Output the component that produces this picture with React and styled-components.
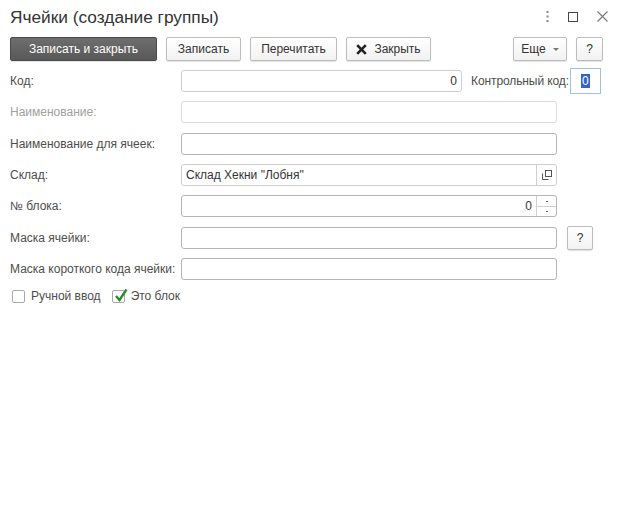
import React from 'react';
import styled, {createGlobalStyle} from 'styled-components';

const GlobalStyle = createGlobalStyle`
  html, body {
    margin: 0;
    padding: 0;
    background: #fff;
  }
  body {
    font-family: "Liberation Sans", Arial, sans-serif;
    font-size: 12px;
    color: #4d4d4d;
  }
`;

const Window = styled.div`
  width: 620px;
  height: 515px;
  box-sizing: border-box;
  padding: 0 17px 0 10px;
`;

const TitleBar = styled.div`
  display: flex;
  align-items: center;
  height: 33px;
`;

const Title = styled.h1`
  flex: 1;
  margin: 0;
  font-size: 17.3px;
  font-weight: normal;
  color: #333;
  padding-top: 1px;
`;

const TitleIcons = styled.div`
  display: flex;
  align-items: center;
  gap: 19px;
  margin-right: -5px;
`;

const Toolbar = styled.div`
  display: flex;
  align-items: center;
  gap: 9px;
  height: 24px;
  margin-top: 4px;
`;

const Button = styled.button`
  height: 24px;
  box-sizing: border-box;
  padding: 0;
  border: 1px solid ${({$primary}) => ($primary ? '#4a4a4a' : '#bdbdbd')};
  border-radius: 2px;
  background: ${({$primary}) =>
    $primary ? 'linear-gradient(#6e6e6e, #585858)' : 'linear-gradient(#ffffff, #f2f2f2)'};
  box-shadow: 0 1px 1px rgba(0, 0, 0, 0.12);
  color: ${({$primary}) => ($primary ? '#fff' : '#333')};
  font-family: "Liberation Sans", Arial, sans-serif;
  font-size: 12px;
  display: inline-flex;
  align-items: center;
  justify-content: center;
  gap: 7px;
  width: ${({$w}) => ($w ? `${$w}px` : 'auto')};
  margin-left: ${({$push}) => ($push ? 'auto' : '0')};
  cursor: pointer;
`;

const Caret = styled.span`
  width: 0;
  height: 0;
  border-left: 3px solid transparent;
  border-right: 3px solid transparent;
  border-top: 3px solid #777;
  margin-top: 1px;
`;

const Form = styled.div`
  display: flex;
  flex-direction: column;
  gap: 9.33px;
  margin-top: 9px;
`;

const Row = styled.div`
  display: flex;
  align-items: center;
  height: 22px;
`;

const Label = styled.label`
  width: 171px;
  flex-shrink: 0;
  color: ${({$muted}) => ($muted ? '#a0a0a0' : '#4d4d4d')};
  white-space: nowrap;
`;

const borders = {
  light: '#dcdcdc',
  soft: '#cfcfcf',
  normal: '#b5b5b5',
};

const Field = styled.div`
  display: flex;
  align-items: stretch;
  width: ${({$w}) => $w}px;
  height: 22px;
  box-sizing: border-box;
  border: 1px solid ${({$tone}) => borders[$tone || 'normal']};
  border-radius: 3px;
  background: #fff;
  overflow: hidden;
  flex-shrink: 0;
`;

const FieldText = styled.div`
  flex: 1;
  display: flex;
  align-items: center;
  justify-content: ${({$right}) => ($right ? 'flex-end' : 'flex-start')};
  padding: 0 4px;
  color: #333;
  font-size: 12px;
`;

const FieldButton = styled.div`
  width: 19px;
  border-left: 1px solid #d0d0d0;
  display: flex;
  align-items: center;
  justify-content: center;
`;

const Spin = styled.div`
  width: 19px;
  border-left: 1px solid #d0d0d0;
  display: flex;
  flex-direction: column;
`;

const SpinHalf = styled.div`
  flex: 1;
  display: flex;
  align-items: center;
  justify-content: center;
  border-top: ${({$bottom}) => ($bottom ? '1px solid #d0d0d0' : 'none')};
`;

const Dot = styled.span`
  width: 2px;
  height: 1px;
  background: #666;
`;

const SideLabel = styled.span`
  margin-left: 9px;
  margin-right: 1px;
  white-space: nowrap;
  letter-spacing: -0.1px;
`;

const FocusField = styled.div`
  width: 31px;
  height: 26px;
  flex-shrink: 0;
  box-sizing: border-box;
  border: 1px solid #9ec1e2;
  display: flex;
  align-items: center;
  padding-left: 10px;
`;

const Selected = styled.span`
  background: #3367c4;
  color: #fff;
  line-height: 14px;
  padding: 0 1px;
`;

const HelpButton = styled(Button)`
  margin-left: 10px;
  width: 26px;
`;

const Checks = styled.div`
  display: flex;
  align-items: center;
  gap: 11px;
  margin-top: 0;
  padding-left: 2px;
`;

const CheckItem = styled.label`
  display: flex;
  align-items: center;
  gap: 6px;
`;

const Box = styled.span`
  position: relative;
  width: 13px;
  height: 13px;
  box-sizing: border-box;
  border: 1px solid #a9a9a9;
  border-radius: 2px;
  background: #fff;
`;

const Tick = styled.svg`
  position: absolute;
  left: 1px;
  top: -3px;
`;

const Checkbox = ({checked, children}) => (
  <CheckItem>
    <Box>
      {checked && (
        <Tick width="14" height="14" viewBox="0 0 14 14">
          <path d="M2 8 L5.5 12 L12.5 1.5" fill="none" stroke="#2f8a2a" strokeWidth="2.4" />
        </Tick>
      )}
    </Box>
    {children}
  </CheckItem>
);

const App = () => (
  <Window>
    <GlobalStyle />
    <TitleBar>
      <Title>Ячейки (создание группы)</Title>
      <TitleIcons>
        <svg width="3" height="11" viewBox="0 0 3 11">
          <rect x="0.5" y="0" width="2" height="2" fill="#888" />
          <rect x="0.5" y="4.5" width="2" height="2" fill="#888" />
          <rect x="0.5" y="9" width="2" height="2" fill="#888" />
        </svg>
        <svg width="10" height="10" viewBox="0 0 10 10">
          <rect x="0.5" y="0.5" width="9" height="9" fill="none" stroke="#444" />
        </svg>
        <svg width="11" height="11" viewBox="0 0 11 11">
          <path d="M0.5 0.5 L10.5 10.5 M10.5 0.5 L0.5 10.5" stroke="#777" strokeWidth="1.1" />
        </svg>
      </TitleIcons>
    </TitleBar>

    <Toolbar>
      <Button $primary $w={147}>Записать и закрыть</Button>
      <Button $w={75}>Записать</Button>
      <Button $w={87}>Перечитать</Button>
      <Button $w={85}>
        <svg width="11" height="11" viewBox="0 0 11 11">
          <path d="M1.2 1.2 L9.8 9.8 M9.8 1.2 L1.2 9.8" stroke="#222" strokeWidth="2.6" />
        </svg>
        Закрыть
      </Button>
      <Button $push $w={54}>
        Еще
        <Caret />
      </Button>
      <Button $w={27}>?</Button>
    </Toolbar>

    <Form>
      <Row>
        <Label>Код:</Label>
        <Field $w={281} $tone="soft">
          <FieldText $right>0</FieldText>
        </Field>
        <SideLabel>Контрольный код:</SideLabel>
        <FocusField>
          <Selected>0</Selected>
        </FocusField>
      </Row>
      <Row>
        <Label $muted>Наименование:</Label>
        <Field $w={376} $tone="light" />
      </Row>
      <Row>
        <Label>Наименование для ячеек:</Label>
        <Field $w={376} />
      </Row>
      <Row>
        <Label>Склад:</Label>
        <Field $w={376} $tone="soft">
          <FieldText>Склад Хекни "Лобня"</FieldText>
          <FieldButton>
            <svg width="10" height="10" viewBox="0 0 10 10">
              <rect x="3.5" y="0.5" width="6" height="6" fill="none" stroke="#555" />
              <path d="M0.5 3.5 V9.5 H6.5" fill="none" stroke="#555" />
            </svg>
          </FieldButton>
        </Field>
      </Row>
      <Row>
        <Label>№ блока:</Label>
        <Field $w={376}>
          <FieldText $right>0</FieldText>
          <Spin>
            <SpinHalf><Dot /></SpinHalf>
            <SpinHalf $bottom><Dot /></SpinHalf>
          </Spin>
        </Field>
      </Row>
      <Row>
        <Label>Маска ячейки:</Label>
        <Field $w={376} />
        <HelpButton>?</HelpButton>
      </Row>
      <Row>
        <Label>Маска короткого кода ячейки:</Label>
        <Field $w={376} />
      </Row>
      <Checks>
        <Checkbox>Ручной ввод</Checkbox>
        <Checkbox checked>Это блок</Checkbox>
      </Checks>
    </Form>
  </Window>
);

export default App;
